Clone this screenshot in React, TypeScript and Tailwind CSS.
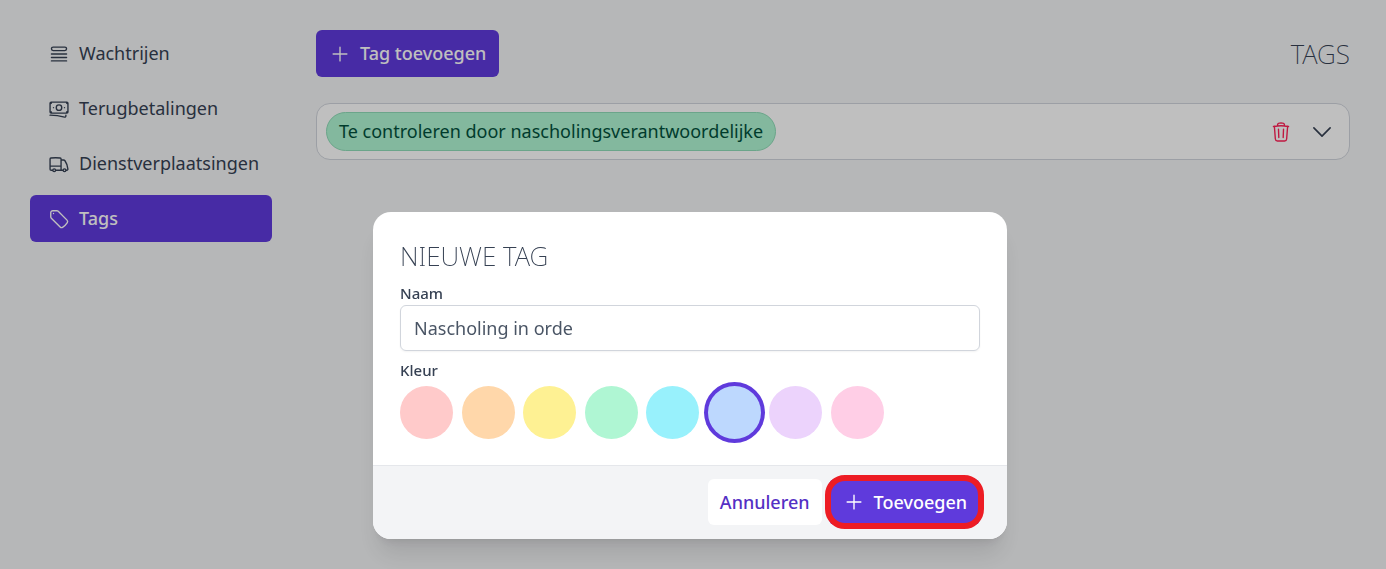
import { useState } from 'react';
import type { ComponentType } from 'react';
import {
  HiOutlineBanknotes,
  HiOutlineChevronDown,
  HiOutlinePlus,
  HiOutlineQueueList,
  HiOutlineTag,
  HiOutlineTrash,
  HiOutlineTruck,
} from 'react-icons/hi2';

type NavItem = {
  label: string;
  icon: ComponentType<{ className?: string }>;
  active?: boolean;
};

const navItems: NavItem[] = [
  { label: 'Wachtrijen', icon: HiOutlineQueueList },
  { label: 'Terugbetalingen', icon: HiOutlineBanknotes },
  { label: 'Dienstverplaatsingen', icon: HiOutlineTruck },
  { label: 'Tags', icon: HiOutlineTag, active: true },
];

const colors = [
  { name: 'Rood', className: 'bg-[#ffcaca]' },
  { name: 'Oranje', className: 'bg-[#ffd7aa]' },
  { name: 'Geel', className: 'bg-[#fef193]' },
  { name: 'Groen', className: 'bg-[#aff6d3]' },
  { name: 'Cyaan', className: 'bg-[#98f1fc]' },
  { name: 'Blauw', className: 'bg-[#bdd8fe]' },
  { name: 'Paars', className: 'bg-[#ecd3fc]' },
  { name: 'Roze', className: 'bg-[#ffcee6]' },
];

function Sidebar() {
  return (
    <nav className="flex w-[242px] shrink-0 flex-col gap-2">
      {navItems.map(({ label, icon: Icon, active }) => (
        <a
          key={label}
          href="#"
          className={
            active
              ? 'flex h-[47px] items-center gap-[9px] rounded-md bg-[#5f3adc] pl-[18px] font-medium text-white'
              : 'flex h-[47px] items-center gap-[9px] rounded-md pl-[18px] text-gray-700'
          }
        >
          <Icon className="size-[22px] shrink-0" />
          {label}
        </a>
      ))}
    </nav>
  );
}

function TagRow() {
  return (
    <div className="flex items-center justify-between rounded-[14px] border border-gray-300 bg-white py-2 pr-[14px] pl-[9px]">
      <span className="rounded-full border border-[#8fdcb8] bg-[#aff6d3] px-3 py-[5px] leading-[27px] text-emerald-900">
        Te controleren door nascholingsverantwoordelijke
      </span>
      <div className="flex items-center gap-[17px]">
        <button type="button" aria-label="Verwijderen" className="text-rose-500">
          <HiOutlineTrash className="size-[22px]" />
        </button>
        <button type="button" aria-label="Openen" className="text-gray-700">
          <HiOutlineChevronDown className="size-[26px]" />
        </button>
      </div>
    </div>
  );
}

function NewTagDialog() {
  const [name, setName] = useState('Nascholing in orde');
  const [color, setColor] = useState('Blauw');

  return (
    <div className="fixed inset-0 flex items-start justify-center bg-black/25 pt-[212px] pr-[6px]">
      <form
        role="dialog"
        aria-labelledby="dialog-title"
        className="w-full max-w-[634px] rounded-[18px] bg-white shadow-xl"
      >
        <div className="px-[27px] pt-[26px] pb-[26px]">
          <h2 id="dialog-title" className="text-[26px] leading-9 font-extralight text-gray-700 uppercase">
            Nieuwe tag
          </h2>
          <label htmlFor="tag-name" className="mt-2 block pb-px text-[15px] leading-[22px] font-medium text-gray-700">
            Naam
          </label>
          <input
            id="tag-name"
            type="text"
            value={name}
            onChange={(e) => setName(e.target.value)}
            className="block h-[46px] w-full rounded-md border border-gray-300 px-[13px] text-gray-600 shadow-xs"
          />
          <fieldset className="mt-2">
            <legend className="float-left w-full text-[15px] leading-[22px] font-medium text-gray-700">Kleur</legend>
            <div className="flex w-full max-w-[484px] justify-between pt-[5px]">
              {colors.map((c) => (
                <input
                  key={c.name}
                  type="radio"
                  name="color"
                  value={c.name}
                  aria-label={c.name}
                  checked={color === c.name}
                  onChange={() => setColor(c.name)}
                  className={`size-[53px] appearance-none rounded-full ring-[#5f3adc] checked:ring-4 ${c.className}`}
                />
              ))}
            </div>
          </fieldset>
        </div>
        <div className="flex items-center justify-end gap-[7px] rounded-b-[18px] border-t border-gray-200 bg-gray-100 pt-[13px] pr-[27px] pb-[14px] pl-[27px]">
          <button type="button" className="h-[46px] rounded-md bg-white px-3 font-medium text-[#5430c4]">
            Annuleren
          </button>
          <div className="relative">
            <button
              type="button"
              className="flex h-[46px] items-center gap-[9px] rounded-md bg-[#5f3adc] pr-[13px] pl-[14px] font-medium text-white"
            >
              <HiOutlinePlus className="size-[22px]" />
              Toevoegen
            </button>
            <span className="pointer-events-none absolute -inset-x-1 -inset-y-1 rounded-[20px] border-6 border-[#ed1c24]" />
          </div>
        </div>
      </form>
    </div>
  );
}

export default function App() {
  return (
    <div className="min-h-screen bg-gray-100 font-['Noto_Sans',sans-serif] text-[18px] leading-[27px]">
      <div className="flex gap-11 pt-[30px] pr-9 pl-[30px]">
        <Sidebar />
        <main className="flex min-w-0 flex-1 flex-col gap-[26px]">
          <header className="flex items-center justify-between">
            <button
              type="button"
              className="flex h-[47px] items-center gap-[9px] rounded-md bg-[#5f3adc] px-[13px] font-medium text-white"
            >
              <HiOutlinePlus className="size-[22px]" />
              Tag toevoegen
            </button>
            <h1 className="text-[26px] leading-9 font-extralight text-gray-700 uppercase">Tags</h1>
          </header>
          <TagRow />
        </main>
      </div>
      <NewTagDialog />
    </div>
  );
}
